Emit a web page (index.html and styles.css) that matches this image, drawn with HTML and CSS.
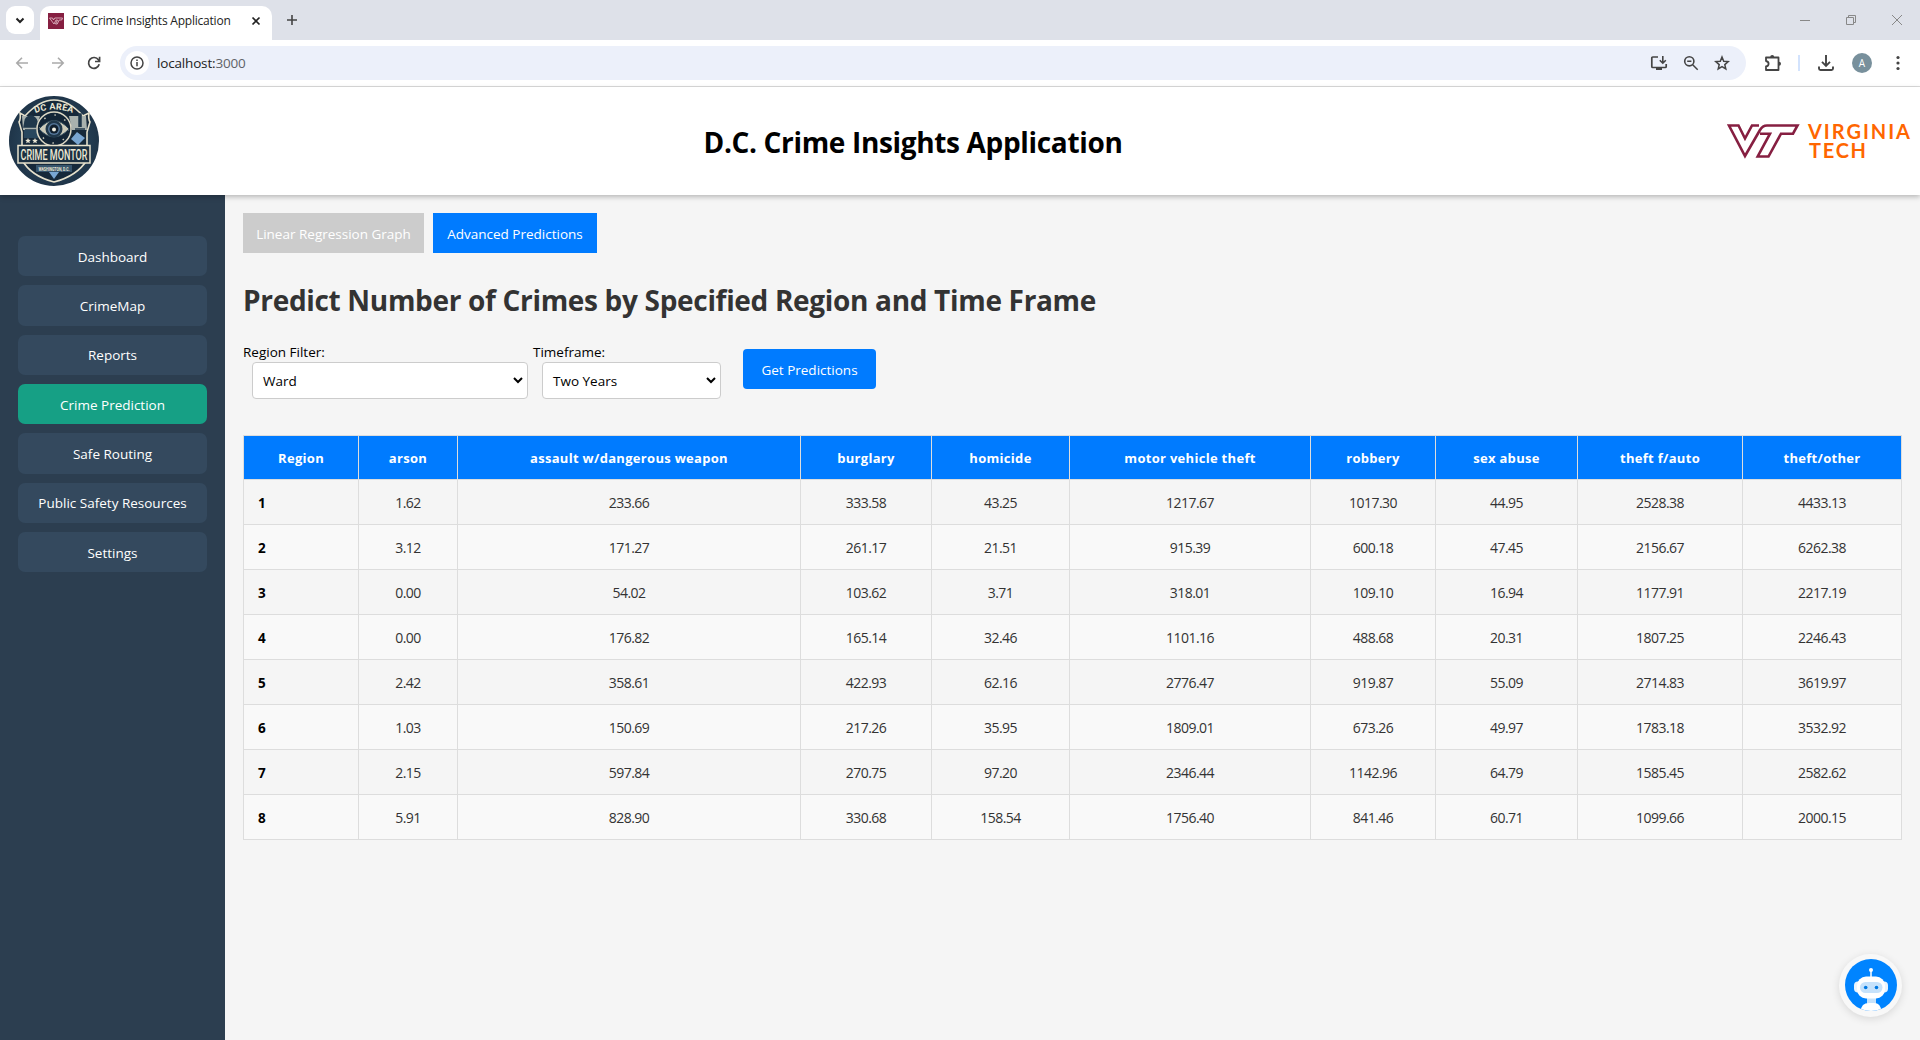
FILE: index.html
```html
<!DOCTYPE html>
<html lang="en">
<head>
<meta charset="utf-8">
<title>DC Crime Insights Application</title>
<link rel="stylesheet" href="styles.css">
</head>
<body>
<div class="tabstrip">
  <button class="tab-search"><svg width="28" height="28" viewBox="0 0 28 28"><path d="M10.500 12.500l3.500 3.500 3.500-3.500" fill="none" stroke="#222" stroke-width="2"/></svg></button>
  <div class="tab">
    <svg class="favicon" width="16" height="16" viewBox="0 0 16 16"><path fill="#861f41" d="M0 0h16v16H0z"/><path d="M1.500 5h3l1 2 1.200-2H14.500l-.8 2h-2.500l-2 4H7.500l2-4H8l-2 4z" fill="none" stroke="#e9c9d3" stroke-width=".8"/></svg>
    <span class="tab-title">DC Crime Insights Application</span>
    <svg class="tab-close" width="10" height="10" viewBox="0 0 10 10"><path d="M1.500 1.500l7 7M8.500 1.500l-7 7" stroke="#222" stroke-width="1.700"/></svg>
  </div>
  <svg class="new-tab" width="12" height="12" viewBox="0 0 12 12"><path d="M6 1v10M1 6h10" stroke="#444" stroke-width="1.600"/></svg>
  <div class="window-controls">
    <svg width="12" height="12" viewBox="0 0 12 12"><path d="M1 6.500h10" stroke="#888"/></svg>
    <svg width="12" height="12" viewBox="0 0 12 12"><path d="M1.500 3.500h7v7h-7zM3.500 3V1.500h7v7H9" fill="none" stroke="#888"/></svg>
    <svg width="12" height="12" viewBox="0 0 12 12"><path d="M1 1l10 10M11 1L1 11" stroke="#888"/></svg>
  </div>
</div>
<div class="toolbar">
  <svg class="nav-icon" width="14" height="14" viewBox="0 0 14 14"><path d="M13 7H2M7 1.800L1.800 7 7 12.200" fill="none" stroke="#aaa" stroke-width="1.600"/></svg>
  <svg class="nav-icon" width="14" height="14" viewBox="0 0 14 14"><path d="M1 7h11M7 1.800L12.200 7 7 12.200" fill="none" stroke="#aaa" stroke-width="1.600"/></svg>
  <svg class="nav-icon" width="14" height="14" viewBox="0 0 14 14"><path d="M12.200 8.300A5.400 5.400 0 1 1 11.400 3.800L12.400 5.200M12.600.8v4.700H8" fill="none" stroke="#444" stroke-width="1.700"/></svg>
  <div class="omnibox">
    <span class="site-info"><svg width="14" height="14" viewBox="0 0 14 14"><circle cx="7" cy="7" r="6" fill="none" stroke="#444" stroke-width="1.500"/><path d="M7 6v4.200M7 3.600v1.500" stroke="#444" stroke-width="1.500"/></svg></span>
    <span class="url">localhost:<span class="port">3000</span></span>
    <div class="omni-icons">
      <svg width="18" height="16" viewBox="0 0 18 16"><path d="M8 2H2.800Q1.800 2 1.800 3v8.500q0 1 1 1h12.400q1 0 1-1V9" fill="none" stroke="#444" stroke-width="1.700"/><path d="M6 13h6v2H6z" fill="#444"/><path d="M12.800 1v7M9.800 5.200l3 3 3-3" fill="none" stroke="#444" stroke-width="1.600"/></svg>
      <svg width="16" height="16" viewBox="0 0 16 16"><circle cx="6.300" cy="6.300" r="4.600" fill="none" stroke="#444" stroke-width="1.600"/><path d="M9.700 9.700l5 5M4.200 6.300h4.200" stroke="#444" stroke-width="1.500"/></svg>
      <svg width="16" height="16" viewBox="0 0 16 16"><path d="M8 2l1.700 4.200 4.500.4-3.400 3 1 4.400L8 11.700 4.200 14l1-4.400-3.400-3 4.500-.4z" fill="none" stroke="#444" stroke-width="1.500"/></svg>
    </div>
  </div>
  <svg class="ext" width="18" height="18" viewBox="0 0 18 18"><path d="M2 3.500h12.500v12.500H2v-3.500q2.600-.6 2.600-2.800T2 7z" fill="none" stroke="#444" stroke-width="1.800" stroke-linejoin="round"/><path d="M6.200 3a2 2 0 0 1 4 0zM15 7.700a2 2 0 0 1 0 4z" fill="#444"/></svg>
  <span class="divider"></span>
  <svg class="download" width="16" height="16" viewBox="0 0 16 16"><path d="M8 0v10.500M4 6.800l4 4 4-4M1 11.500v2q0 1.500 1.500 1.500h11q1.500 0 1.500-1.500v-2" fill="none" stroke="#444" stroke-width="1.900"/></svg>
  <span class="avatar">A</span>
  <svg class="kebab" width="4" height="16" viewBox="0 0 4 16" fill="#444"><circle cx="2" cy="2.500" r="1.600"/><circle cx="2" cy="8" r="1.600"/><circle cx="2" cy="13.500" r="1.600"/></svg>
</div>
<header class="app-header">
  <svg class="seal" width="90" height="90" viewBox="0 0 90 90">
    <defs><radialGradient id="sealBg"><stop offset="0" stop-color="#33566f"/><stop offset="1" stop-color="#1f3549"/></radialGradient></defs>
    <circle cx="45" cy="45" r="45" fill="url(#sealBg)"/>
    <path d="M16 20Q45-12 74 20L80 17Q79 23 81 26L78 36V64Q68 80 45 86 22 80 13 64V36L10 26Q12 23 11 17z" fill="#16293a" stroke="#e6e1cc" stroke-width="1.600"/>
    <path d="M13 20h18l-4 14H14zM60 20h17l1 14H63z" fill="#a9b2ae"/>
    <path d="M16 34h12M15 31h13v-5q-1-5-6-6-6 1-6 6zM66 33h10M70 31V18h2v13" fill="#20384b" stroke="#20384b" stroke-width="1.500"/>
    <path d="M15 34h14v8H15z" fill="#28475e"/>
    <path d="M19 42l.8 1.800 2 .2-1.500 1.300.5 2-1.800-1-1.800 1 .5-2-1.500-1.300 2-.2zM26 42l.8 1.800 2 .2-1.500 1.300.5 2-1.800-1-1.800 1 .5-2-1.500-1.300 2-.2z" fill="#ece8d5"/>
    <path d="M68 36l8 6-7 7-7-6z" fill="#78a6d2"/>
    <circle cx="45" cy="33" r="17" fill="#132536" stroke="#ddd9c6" stroke-width="1.500"/>
    <path id="sealArc" d="M23 18.500Q45 8.500 67 18.500" fill="none"/>
    <text class="seal-arc"><textPath href="#sealArc" startOffset="50%">DC AREA</textPath></text>
    <circle cx="45" cy="33" r="14" fill="none" stroke="#c9c9bb" stroke-width="1.500" stroke-dasharray="1.500 9.500"/>
    <path d="M30 33Q45 16 60 33 45 49 30 33z" fill="#cbcab9" stroke="#314b5d"/>
    <circle cx="45" cy="33" r="8.500" fill="#20384b"/><circle cx="45" cy="33" r="6" fill="#54779a"/><circle cx="45" cy="33" r="4.500" fill="#101f2d"/><circle cx="45" cy="33.500" r="2" fill="#f4f2e4"/>
    <path d="M9 49.500h72v17.500H9z" fill="#1b3042" stroke="#e6e1cc" stroke-width="1.500"/>
    <text class="seal-main" x="45" y="64" textLength="67" lengthAdjust="spacingAndGlyphs">CRIME MONTOR</text>
    <path d="M27 69h36v7H27z" fill="#36546c"/>
    <text class="seal-sub" x="45" y="74.500" textLength="31" lengthAdjust="spacingAndGlyphs">WASHINGTON, D.C.</text>
    <path d="M40 76h10l-5 7z" fill="#78a6d2"/>
  </svg>
  <h1 class="app-title">D.C. Crime Insights Application</h1>
  <svg class="vt-logo" width="184" height="34" viewBox="0 0 184 34">
    <path d="M32 1.500H25L18 14.500 11.500 1.500H2L18 32 33 6Q35.500 1.500 40 1.500H70.500L66 9.700H54L41.500 32.500H30.700L43 9.700H33" fill="none" stroke="#861f41" stroke-width="2.600"/>
    <g class="vt-text"><text x="81" y="15" textLength="102">VIRGINIA</text><text x="82" y="34" textLength="57">TECH</text></g>
  </svg>
</header>
<div class="app-body">
  <nav class="sidebar">
    <a class="nav-item">Dashboard</a>
    <a class="nav-item">CrimeMap</a>
    <a class="nav-item">Reports</a>
    <a class="nav-item active">Crime Prediction</a>
    <a class="nav-item">Safe Routing</a>
    <a class="nav-item">Public Safety Resources</a>
    <a class="nav-item">Settings</a>
  </nav>
  <main class="content">
    <div class="view-tabs">
      <button class="view-tab linear">Linear Regression Graph</button>
      <button class="view-tab advanced">Advanced Predictions</button>
    </div>
    <h2 class="page-title">Predict Number of Crimes by Specified Region and Time Frame</h2>
    <div class="filters">
      <div class="filter region"><label>Region Filter:</label><div class="select">Ward<svg width="10" height="7" viewBox="0 0 10 7"><path d="M1 1l4 4 4-4" fill="none" stroke="#000" stroke-width="2"/></svg></div></div>
      <div class="filter timeframe"><label>Timeframe:</label><div class="select">Two Years<svg width="10" height="7" viewBox="0 0 10 7"><path d="M1 1l4 4 4-4" fill="none" stroke="#000" stroke-width="2"/></svg></div></div>
      <button class="submit">Get Predictions</button>
    </div>
    <table class="results">
      <colgroup><col class="c-region"><col class="c-arson"><col class="c-assault"><col class="c-burglary"><col class="c-homicide"><col class="c-motor"><col class="c-robbery"><col class="c-sex"><col class="c-auto"><col class="c-other"></colgroup>
      <thead><tr><th>Region</th><th>arson</th><th>assault w/dangerous weapon</th><th>burglary</th><th>homicide</th><th>motor vehicle theft</th><th>robbery</th><th>sex abuse</th><th>theft f/auto</th><th>theft/other</th></tr></thead>
      <tbody>
        <tr><td>1</td><td>1.62</td><td>233.66</td><td>333.58</td><td>43.25</td><td>1217.67</td><td>1017.30</td><td>44.95</td><td>2528.38</td><td>4433.13</td></tr>
        <tr><td>2</td><td>3.12</td><td>171.27</td><td>261.17</td><td>21.51</td><td>915.39</td><td>600.18</td><td>47.45</td><td>2156.67</td><td>6262.38</td></tr>
        <tr><td>3</td><td>0.00</td><td>54.02</td><td>103.62</td><td>3.71</td><td>318.01</td><td>109.10</td><td>16.94</td><td>1177.91</td><td>2217.19</td></tr>
        <tr><td>4</td><td>0.00</td><td>176.82</td><td>165.14</td><td>32.46</td><td>1101.16</td><td>488.68</td><td>20.31</td><td>1807.25</td><td>2246.43</td></tr>
        <tr><td>5</td><td>2.42</td><td>358.61</td><td>422.93</td><td>62.16</td><td>2776.47</td><td>919.87</td><td>55.09</td><td>2714.83</td><td>3619.97</td></tr>
        <tr><td>6</td><td>1.03</td><td>150.69</td><td>217.26</td><td>35.95</td><td>1809.01</td><td>673.26</td><td>49.97</td><td>1783.18</td><td>3532.92</td></tr>
        <tr><td>7</td><td>2.15</td><td>597.84</td><td>270.75</td><td>97.20</td><td>2346.44</td><td>1142.96</td><td>64.79</td><td>1585.45</td><td>2582.62</td></tr>
        <tr><td>8</td><td>5.91</td><td>828.90</td><td>330.68</td><td>158.54</td><td>1756.40</td><td>841.46</td><td>60.71</td><td>1099.66</td><td>2000.15</td></tr>
      </tbody>
    </table>
  </main>
</div>
<div class="chatbot">
  <svg width="52" height="52" viewBox="0 0 52 52">
    <defs><clipPath id="botClip"><circle cx="26" cy="26" r="26"/></clipPath></defs>
    <g clip-path="url(#botClip)"><path fill="#0084ff" d="M0 0h52v52H0z"/>
    <path d="M26 11v8" stroke="#fff" stroke-width="1.500"/><circle cx="26" cy="11" r="2" fill="#fff"/>
    <rect x="9" y="22.500" width="34" height="11" rx="4" fill="#eaf4fd"/>
    <path d="M22 36h9v9h-9z" fill="#c6e2fb"/>
    <path d="M16 52q0-8 8-8h5q7 0 7 8z" fill="#fff"/>
    <rect x="12" y="17.500" width="28" height="22" rx="9" fill="#fff"/>
    <rect x="15" y="23" width="22.500" height="11" rx="5.500" fill="#c6e2fb"/>
    <circle cx="20.700" cy="28.500" r="1.800" fill="#0078e0"/><circle cx="31.500" cy="28.500" r="1.800" fill="#0078e0"/></g>
  </svg>
</div>
</body>
</html>
```
FILE: styles.css
```css
* { box-sizing: border-box; }
body {
  margin: 0;
  width: 1920px;
  height: 1040px;
  overflow: hidden;
  display: flex;
  flex-direction: column;
  background: #f5f5f5;
  color: #000;
  font: 13.5px/18px "Open Sans", "Noto Sans", sans-serif;
}
button { font: inherit; border: 0; padding: 0; }
svg { display: block; flex: none; overflow: visible; }

.tabstrip { display: flex; align-items: center; height: 40px; flex: none; padding-left: 6px; background: #dee1e9; }
.tab-search { width: 28px; height: 28px; border-radius: 9px; background: #fff; }
.tab { display: flex; align-items: center; align-self: flex-end; width: 232px; height: 34px; margin-left: 6px; padding: 0 11px 4px 8px; border-radius: 10px 10px 0 0; background: #fff; }
.tab-title { flex: 1; margin-left: 8px; font-size: 12px; letter-spacing: -0.22px; color: #222; white-space: nowrap; }
.new-tab { margin-left: 14px; }
.window-controls { display: flex; gap: 34px; margin-left: auto; padding-right: 17px; }

.toolbar { display: flex; align-items: center; height: 47px; flex: none; padding: 0 18px 1px 15px; background: #fff; border-bottom: 1px solid #dcdcdc; }
.nav-icon { margin-right: 22px; }
.omnibox { display: flex; align-items: center; width: 1626px; height: 34px; margin-left: -3px; padding-left: 5px; border-radius: 17px; background: #ecf0fa; }
.site-info { display: grid; place-items: center; width: 24px; height: 24px; border-radius: 50%; background: #fff; }
.url { margin-left: 8px; font-size: 13.5px; letter-spacing: -0.17px; color: #222; }
.port { color: #5f6368; }
.omni-icons { display: flex; align-items: center; gap: 15px; margin-left: auto; padding-right: 16px; }
.ext { margin-left: 18px; }
.divider { width: 2px; height: 16px; margin: 0 18px 0 16px; background: #d3e3fd; }
.avatar { display: grid; place-items: center; width: 20px; height: 20px; margin: 0 24px 0 18px; border-radius: 50%; background: #78909c; color: #fff; font-size: 10px; }

.app-header { position: relative; display: flex; align-items: center; justify-content: space-between; height: 108px; flex: none; padding: 0 9px; background: #fff; box-shadow: 0 2px 5px rgba(0, 0, 0, 0.25); }
.app-title { margin: 2px 0 0; font-size: 28px; line-height: 36px; font-weight: 700; letter-spacing: -0.34px; }
.seal text { fill: #ece8d5; font-family: Roboto, sans-serif; font-weight: 700; text-anchor: middle; }
.seal .seal-arc { font-size: 9px; letter-spacing: 0.2px; }
.seal .seal-main { font-size: 14px; font-weight: 500; }
.seal .seal-sub { font-size: 4.5px; }
.vt-text { fill: #ff6600; font: 700 20px Lato, sans-serif; }

.app-body { display: flex; flex: 1; }
.sidebar { display: flex; flex-direction: column; gap: 9px; width: 225px; padding: 41px 18px 0; background: #2c3e50; }
.nav-item { display: grid; place-items: center; height: 40.33px; padding-top: 1px; border-radius: 7px; background: #34495e; color: #fff; }
.nav-item.active { background: #16a085; }

.content { flex: 1; padding: 18px 18px 0; }
.view-tabs { display: flex; gap: 9px; height: 40px; }
.view-tab { padding-top: 2px; color: #fff; background: #007bff; }
.view-tab.linear { width: 181px; background: #ccc; }
.view-tab.advanced { width: 164px; }
.page-title { margin: 29px 0 0; color: #333; font-size: 28px; line-height: 36px; font-weight: 700; letter-spacing: -0.32px; white-space: nowrap; }
.filters { display: flex; margin-top: 25px; height: 56px; }
.region { width: 290px; }
.timeframe { width: 210px; }
.filter label { display: block; height: 19px; line-height: 18px; }
.select { display: flex; align-items: center; justify-content: space-between; height: 37px; margin-left: 9px; padding: 0 4px 0 10px; border: 1px solid #ccc; border-radius: 4px; background: #fff; }
.region .select { width: 276px; }
.timeframe .select { width: 179px; }
.submit { width: 133px; height: 40px; margin-top: 6px; padding-top: 1px; border-radius: 4px; background: #007bff; color: #fff; }

.results { width: 1659px; margin-top: 36px; table-layout: fixed; border-collapse: collapse; }
.results th, .results td { padding: 0; border: 1px solid #ddd; text-align: center; }
.results th { height: 44px; background: #007bff; color: #fff; font-size: 13px; font-weight: 700; letter-spacing: 0.3px; }
.results td { height: 45px; padding-top: 2px; color: #333; font-size: 14px; letter-spacing: -0.55px; }
.results tbody tr:nth-child(even) { background: #f9f9f9; }
.results td:first-child { padding-left: 14px; text-align: left; color: #000; font-size: 13.5px; font-weight: 700; }
.c-region { width: 115px; }
.c-arson { width: 99px; }
.c-assault { width: 343px; }
.c-burglary { width: 131px; }
.c-homicide { width: 138px; }
.c-motor { width: 241px; }
.c-robbery { width: 125px; }
.c-sex { width: 142px; }
.c-auto { width: 165px; }
.c-other { width: 159px; }

.chatbot { position: fixed; left: 1839px; top: 954px; display: grid; place-items: center; width: 63px; height: 63px; padding-bottom: 2px; border-radius: 50%; background: #f8f8f8; box-shadow: 0 2px 9px rgba(0, 0, 0, 0.12); }
```
